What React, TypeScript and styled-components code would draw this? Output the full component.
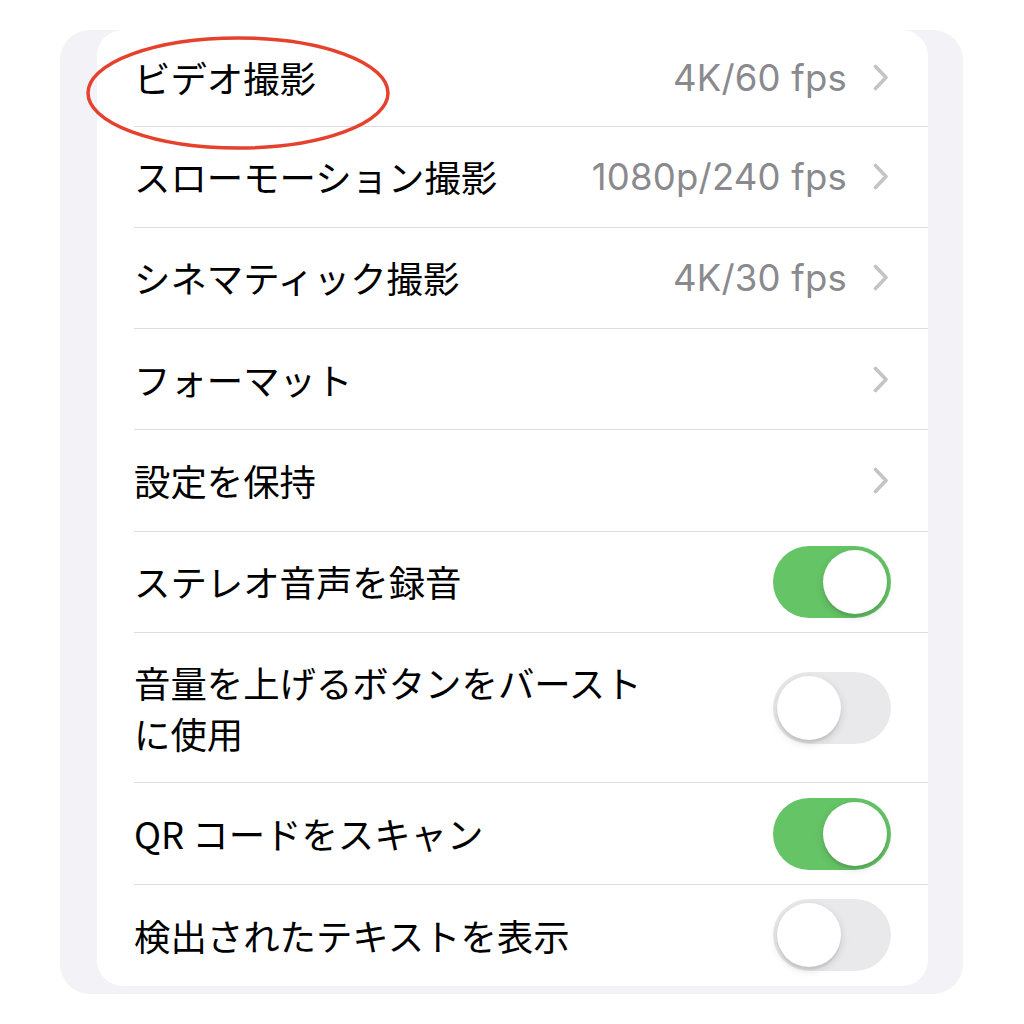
import React from "react";
import styled, { createGlobalStyle } from "styled-components";

const GlobalStyle = createGlobalStyle`
  html, body {
    margin: 0;
    padding: 0;
    background: #ffffff;
  }
  body {
    font-family: "Inter", "Noto Sans CJK JP", sans-serif;
    -webkit-font-smoothing: antialiased;
  }
`;

const Page = styled.div`
  width: 1024px;
  height: 1024px;
  box-sizing: border-box;
  padding: 30px 61px 0 60px;
  background: #ffffff;
`;

const Frame = styled.div`
  position: relative;
  background: #f2f2f7;
  border-radius: 30px;
  padding: 0 35px 8px 37px;
`;

const Card = styled.ul`
  list-style: none;
  margin: 0;
  padding: 0;
  background: #ffffff;
  border-radius: 26px;
  overflow: hidden;
`;

const Row = styled.li`
  padding-left: 37px;
`;

const RowInner = styled.div<{ $height: number; $last?: boolean }>`
  display: flex;
  align-items: center;
  min-height: ${(p) => p.$height}px;
  box-sizing: border-box;
  padding-right: 37px;
  border-bottom: ${(p) => (p.$last ? "none" : "1.5px solid #dedee2")};
`;

const Label = styled.span<{ $maxWidth?: number }>`
  flex: 1;
  font-family: "Noto Sans CJK JP", sans-serif;
  font-size: 36.4px;
  line-height: 51px;
  color: #000000;
  max-width: ${(p) => (p.$maxWidth ? `${p.$maxWidth}px` : "none")};
  margin-right: auto;
`;

const Value = styled.span`
  font-family: "Inter", "Noto Sans CJK JP", sans-serif;
  font-size: 36.5px;
  letter-spacing: 0.2px;
  color: #8a8a8e;
  margin-left: 20px;
  margin-right: 26px;
`;

const Chevron = styled.svg`
  width: 16px;
  height: 27px;
  flex-shrink: 0;
  margin-right: 2px;
`;

const Track = styled.div<{ $on: boolean }>`
  position: relative;
  width: 118px;
  height: 72px;
  border-radius: 36px;
  flex-shrink: 0;
  background: ${(p) => (p.$on ? "#65c466" : "#e9e9eb")};
`;

const Knob = styled.div<{ $on: boolean }>`
  position: absolute;
  top: 4px;
  left: ${(p) => (p.$on ? "50px" : "4px")};
  width: 64px;
  height: 64px;
  border-radius: 50%;
  background: #ffffff;
  box-shadow: 0 3px 8px rgba(0, 0, 0, 0.15), 0 3px 1px rgba(0, 0, 0, 0.06);
`;

const Annotation = styled.svg`
  position: absolute;
  left: 25px;
  top: 5px;
  width: 306px;
  height: 116px;
  pointer-events: none;
`;

type Item =
  | { label: string; kind: "link"; value?: string }
  | { label: string; kind: "toggle"; on: boolean; wrap?: number };

const items: Item[] = [
  { label: "ビデオ撮影", kind: "link", value: "4K/60 fps" },
  { label: "スローモーション撮影", kind: "link", value: "1080p/240 fps" },
  { label: "シネマティック撮影", kind: "link", value: "4K/30 fps" },
  { label: "フォーマット", kind: "link" },
  { label: "設定を保持", kind: "link" },
  { label: "ステレオ音声を録音", kind: "toggle", on: true },
  { label: "音量を上げるボタンをバーストに使用", kind: "toggle", on: false, wrap: 530 },
  { label: "QR コードをスキャン", kind: "toggle", on: true },
  { label: "検出されたテキストを表示", kind: "toggle", on: false },
];

function ChevronIcon() {
  return (
    <Chevron viewBox="0 0 16 27" fill="none">
      <path
        d="M2.5 2.5 L13 13.5 L2.5 24.5"
        stroke="#c4c4c7"
        strokeWidth="3.6"
        strokeLinecap="round"
        strokeLinejoin="round"
      />
    </Chevron>
  );
}

function Toggle({ on }: { on: boolean }) {
  return (
    <Track $on={on}>
      <Knob $on={on} />
    </Track>
  );
}

export default function App() {
  return (
    <>
      <GlobalStyle />
      <Page>
        <Frame>
          <Card>
            {items.map((item, i) => {
              const height = i === 0 ? 96.5 : item.kind === "toggle" && item.wrap ? 150.5 : 101.3;
              return (
                <Row key={item.label}>
                  <RowInner $height={height} $last={i === items.length - 1}>
                    <Label $maxWidth={item.kind === "toggle" ? item.wrap : undefined}>
                      {item.label}
                    </Label>
                    {item.kind === "link" && (
                      <>
                        {item.value && <Value>{item.value}</Value>}
                        <ChevronIcon />
                      </>
                    )}
                    {item.kind === "toggle" && <Toggle on={item.on} />}
                  </RowInner>
                </Row>
              );
            })}
          </Card>
          <Annotation viewBox="0 0 306 116">
            <ellipse cx="153" cy="58" rx="150" ry="55" fill="none" stroke="#e5412d" strokeWidth="3.5" />
          </Annotation>
        </Frame>
      </Page>
    </>
  );
}
